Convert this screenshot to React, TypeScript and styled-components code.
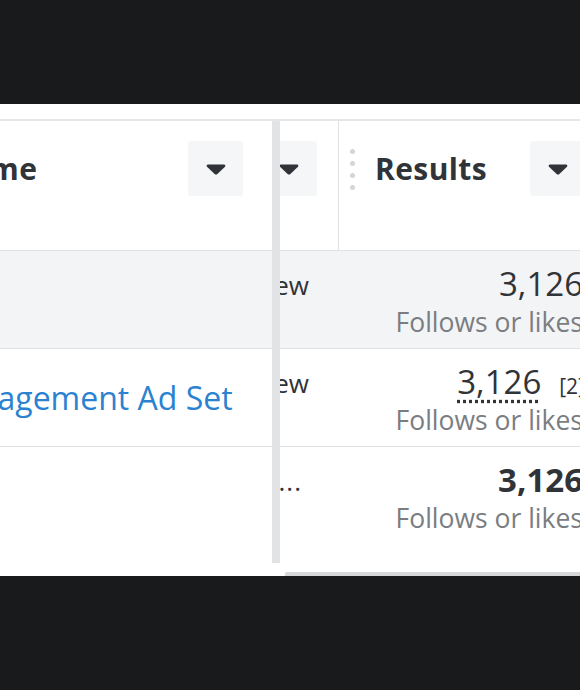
import styled, { createGlobalStyle } from "styled-components";

const GlobalStyle = createGlobalStyle`
  html, body {
    margin: 0;
    padding: 0;
    background: #181a1b;
  }
  body {
    font-family: "Open Sans", "Noto Sans", sans-serif;
    color: #1c2b33;
  }
`;

interface ResultRow {
  delivery: string;
  name?: string;
  value: string;
  tinted?: boolean;
  bold?: boolean;
  dotted?: boolean;
  note?: string;
  truncated?: boolean;
}

const rows: ResultRow[] = [
  { delivery: "In review", value: "3,126", tinted: true },
  { delivery: "In review", name: "Page Engagement Ad Set", value: "3,126", dotted: true, note: "[2]" },
  { delivery: "Active ...", value: "3,126", bold: true, truncated: true },
];

function Caret() {
  return (
    <svg width="20" height="12" viewBox="0 0 20 12">
      <path d="M2 1.5h16c1.2 0 1.8 1.3 1 2.2l-7.6 7.3c-.8.7-2 .7-2.8 0L1 3.7C.2 2.8.8 1.5 2 1.5z" fill="#303338" />
    </svg>
  );
}

function App() {
  return (
    <>
      <GlobalStyle />
      <Page>
        <Panel>
          <TopStrip />
          <Body>
            <Pane>
              <FrozenInner>
                <HeaderRow>
                  <NameHeader>
                    <HeaderTitle>Ad set name</HeaderTitle>
                    <SortButton><Caret /></SortButton>
                  </NameHeader>
                </HeaderRow>
                {rows.map((row, i) => (
                  <Row key={i} $tinted={row.tinted}>
                    <NameCell>{row.name && <NameLink>{row.name}</NameLink>}</NameCell>
                  </Row>
                ))}
              </FrozenInner>
            </Pane>
            <FreezeBar />
            <Pane>
              <ScrollInner>
                <HeaderRow>
                  <DeliveryHeader>
                    <HeaderTitle>Delivery</HeaderTitle>
                    <SortButton><Caret /></SortButton>
                  </DeliveryHeader>
                  <ResultsHeader>
                    <DragHandle>
                      <Dot /><Dot /><Dot /><Dot />
                    </DragHandle>
                    <HeaderTitle>Results</HeaderTitle>
                    <SortButton><Caret /></SortButton>
                  </ResultsHeader>
                </HeaderRow>
                {rows.map((row, i) => (
                  <Row key={i} $tinted={row.tinted}>
                    <DeliveryCell $truncated={row.truncated}>{row.delivery}</DeliveryCell>
                    <ResultCell>
                      <ValueLine>
                        <Value $bold={row.bold} $dotted={row.dotted}>{row.value}</Value>
                        {row.note && <Note>{row.note}</Note>}
                      </ValueLine>
                      <SubLabel>Follows or likes</SubLabel>
                    </ResultCell>
                  </Row>
                ))}
              </ScrollInner>
            </Pane>
          </Body>
          <Footer>
            <ScrollTrack />
          </Footer>
        </Panel>
      </Page>
    </>
  );
}

const Page = styled.div`
  width: 580px;
  height: 690px;
  padding-top: 104px;
  box-sizing: border-box;
  overflow: hidden;
`;

const Panel = styled.div`
  height: 472px;
  background: #ffffff;
  display: flex;
  flex-direction: column;
`;

const TopStrip = styled.div`
  height: 15px;
  border-bottom: 2px solid #e4e6e8;
`;

const Body = styled.div`
  display: flex;
  height: 442px;
`;

const Pane = styled.div`
  overflow: hidden;
  flex: 1;
  &:first-child {
    flex: 0 0 272px;
  }
`;

const FreezeBar = styled.div`
  flex: 0 0 8px;
  background: #e2e3e5;
`;

const FrozenInner = styled.div`
  width: 440px;
  margin-left: -168px;
`;

const ScrollInner = styled.div`
  width: 494px;
  margin-left: -161px;
`;

const HeaderRow = styled.div`
  display: flex;
  height: 129px;
  border-bottom: 1px solid #dfe1e4;
`;

const Row = styled.div<{ $tinted?: boolean }>`
  display: flex;
  height: 97px;
  border-bottom: 1px solid #dfe1e4;
  background: ${({ $tinted }) => ($tinted ? "#f3f4f5" : "#ffffff")};
  &:last-child {
    border-bottom: none;
  }
`;

const HeaderCell = styled.div`
  display: flex;
  align-items: flex-start;
  box-sizing: border-box;
  padding-top: 20px;
`;

const NameHeader = styled(HeaderCell)`
  width: 440px;
  padding-left: 15px;
  padding-right: 29px;
`;

const DeliveryHeader = styled(HeaderCell)`
  width: 220px;
  padding-left: 16px;
  padding-right: 26px;
  border-right: 1px solid #dfe1e4;
`;

const ResultsHeader = styled(HeaderCell)`
  width: 274px;
  padding-left: 11px;
  padding-right: 28px;
`;

const HeaderTitle = styled.span`
  font-size: 30px;
  font-weight: 700;
  letter-spacing: 0.4px;
  line-height: 55px;
  color: #303338;
  white-space: nowrap;
`;

const SortButton = styled.div`
  width: 55px;
  height: 55px;
  flex: 0 0 55px;
  margin-left: auto;
  display: flex;
  align-items: center;
  justify-content: center;
  background: #f5f6f7;
  border-radius: 3px;
`;

const DragHandle = styled.div`
  display: flex;
  flex-direction: column;
  gap: 7px;
  padding-top: 8px;
  margin-right: 20px;
`;

const Dot = styled.span`
  width: 5px;
  height: 5px;
  border-radius: 50%;
  background: #d3d5d8;
`;

const NameCell = styled.div`
  width: 440px;
  box-sizing: border-box;
  padding-left: 30px;
  display: flex;
  align-items: center;
`;

const NameLink = styled.span`
  font-size: 32px;
  color: #2b82d0;
  white-space: nowrap;
`;

const DeliveryCell = styled.div<{ $truncated?: boolean }>`
  width: 220px;
  box-sizing: border-box;
  padding: 16px ${({ $truncated }) => ($truncated ? "36px" : "29px")} 0 16px;
  font-size: 26px;
  line-height: 36px;
  letter-spacing: ${({ $truncated }) => ($truncated ? "1px" : "0")};
  color: #303338;
  text-align: right;
  white-space: nowrap;
  border-right: 1px solid transparent;
`;

const ResultCell = styled.div`
  width: 274px;
  box-sizing: border-box;
  padding: 14px 30px 0 0;
  text-align: right;
`;

const ValueLine = styled.div`
  display: flex;
  justify-content: flex-end;
  align-items: baseline;
  gap: 18px;
  height: 38px;
`;

const Value = styled.span<{ $bold?: boolean; $dotted?: boolean }>`
  font-size: 33px;
  line-height: 38px;
  font-weight: ${({ $bold }) => ($bold ? 700 : 400)};
  color: #303338;
  text-decoration: ${({ $dotted }) => ($dotted ? "underline dotted #303338" : "none")};
  text-underline-offset: 6px;
`;

const Note = styled.span`
  font-size: 21px;
  color: #303338;
  margin-right: -2px;
`;

const SubLabel = styled.div`
  font-size: 26.5px;
  line-height: 38px;
  color: #7a7d82;
  white-space: nowrap;
`;

const Footer = styled.div`
  flex: 1;
  display: flex;
  align-items: flex-end;
  padding-left: 285px;
`;

const ScrollTrack = styled.div`
  flex: 1;
  height: 4px;
  background: #d6d7d9;
  border-radius: 2px 0 0 0;
`;

export default App;
